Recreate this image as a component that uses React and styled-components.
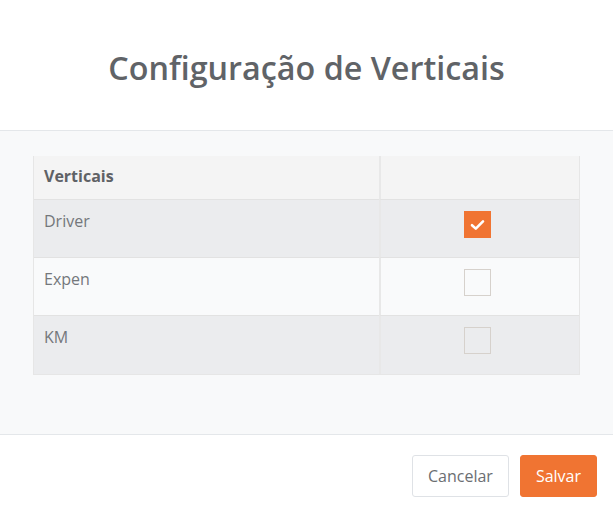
import React, { useState } from "react";
import styled, { createGlobalStyle } from "styled-components";

const Global = createGlobalStyle`
  body {
    margin: 0;
    font-family: "Open Sans", "Liberation Sans", sans-serif;
    background: #fff;
  }
`;

const Modal = styled.div`
  width: 613px;
  height: 512px;
  display: flex;
  flex-direction: column;
  background: #fff;
`;

const Header = styled.header`
  height: 131px;
  display: flex;
  align-items: center;
  justify-content: center;
  border-bottom: 1px solid #e4e7ea;
  box-sizing: border-box;
  padding-top: 4px;
`;

const Title = styled.h1`
  margin: 0;
  font-size: 32.3px;
  font-weight: 600;
  color: #606367;
`;

const Body = styled.section`
  height: 304px;
  box-sizing: border-box;
  background: #f8f9fa;
  padding: 25px 33px 0 33px;
  border-bottom: 1px solid #e4e7ea;
`;

const Table = styled.div`
  display: grid;
  grid-template-columns: 345px 1fr;
  width: 547px;
  border: 1px solid #e6e6e6;
  border-top: none;
  box-sizing: border-box;
`;

const Cell = styled.div`
  height: ${(p) => (p.$head ? "44px" : "58px")};
  box-sizing: border-box;
  padding: ${(p) => (p.$head ? "8px 10px" : "9px 10px")};
  background: ${(p) => p.$bg};
  border-bottom: 1px solid #e2e2e2;
  border-left: ${(p) => (p.$right ? "2px solid #e8e8e8" : "none")};
  font-size: 16px;
  font-weight: ${(p) => (p.$head ? 700 : 400)};
  color: ${(p) => (p.$head ? "#5f6266" : "#74777b")};
  line-height: 24px;
  display: flex;
  justify-content: ${(p) => (p.$right ? "center" : "flex-start")};
  align-items: flex-start;
  &:nth-last-child(-n + 2) {
    border-bottom: none;
  }
`;

const Check = styled.button`
  width: 27px;
  height: 27px;
  margin-top: 2px;
  margin-left: -6px;
  padding: 0;
  border: 1px solid ${(p) => (p.$on ? "#f07432" : "#d6d1cc")};
  background: ${(p) => (p.$on ? "#f07432" : "transparent")};
  display: flex;
  align-items: center;
  justify-content: center;
  cursor: pointer;
`;

const Footer = styled.footer`
  flex: 1;
  display: flex;
  justify-content: flex-end;
  align-items: flex-start;
  gap: 11px;
  padding: 20px 16px 0 0;
`;

const Button = styled.button`
  height: 42px;
  padding: 0 15px;
  border-radius: 3px;
  font-family: inherit;
  font-size: 16px;
  cursor: pointer;
  border: 1px solid ${(p) => (p.$primary ? "#f07432" : "#dfe2e6")};
  background: ${(p) => (p.$primary ? "#f07432" : "#fff")};
  color: ${(p) => (p.$primary ? "#fff" : "#6b6e72")};
`;

const rows = [
  { name: "Driver", on: true, bg: "#ebecee" },
  { name: "Expen", on: false, bg: "#f9fafb" },
  { name: "KM", on: false, bg: "#ebecee" },
];

export default function App() {
  const [state, setState] = useState(rows.map((r) => r.on));
  const toggle = (i) => setState((s) => s.map((v, j) => (j === i ? !v : v)));

  return (
    <Modal>
      <Global />
      <Header>
        <Title>Configuração de Verticais</Title>
      </Header>
      <Body>
        <Table>
          <Cell $head $bg="#f4f4f4">Verticais</Cell>
          <Cell $head $right $bg="#f4f4f4" />
          {rows.map((r, i) => (
            <React.Fragment key={r.name}>
              <Cell $bg={r.bg}>{r.name}</Cell>
              <Cell $right $bg={r.bg}>
                <Check $on={state[i]} onClick={() => toggle(i)}>
                  {state[i] && (
                    <svg width="15" height="12" viewBox="0 0 15 12">
                      <path d="M2 6.2 L5.8 9.6 L13 2.4" fill="none" stroke="#fff" strokeWidth="2.6" strokeLinecap="round" strokeLinejoin="round" />
                    </svg>
                  )}
                </Check>
              </Cell>
            </React.Fragment>
          ))}
        </Table>
      </Body>
      <Footer>
        <Button>Cancelar</Button>
        <Button $primary>Salvar</Button>
      </Footer>
    </Modal>
  );
}
